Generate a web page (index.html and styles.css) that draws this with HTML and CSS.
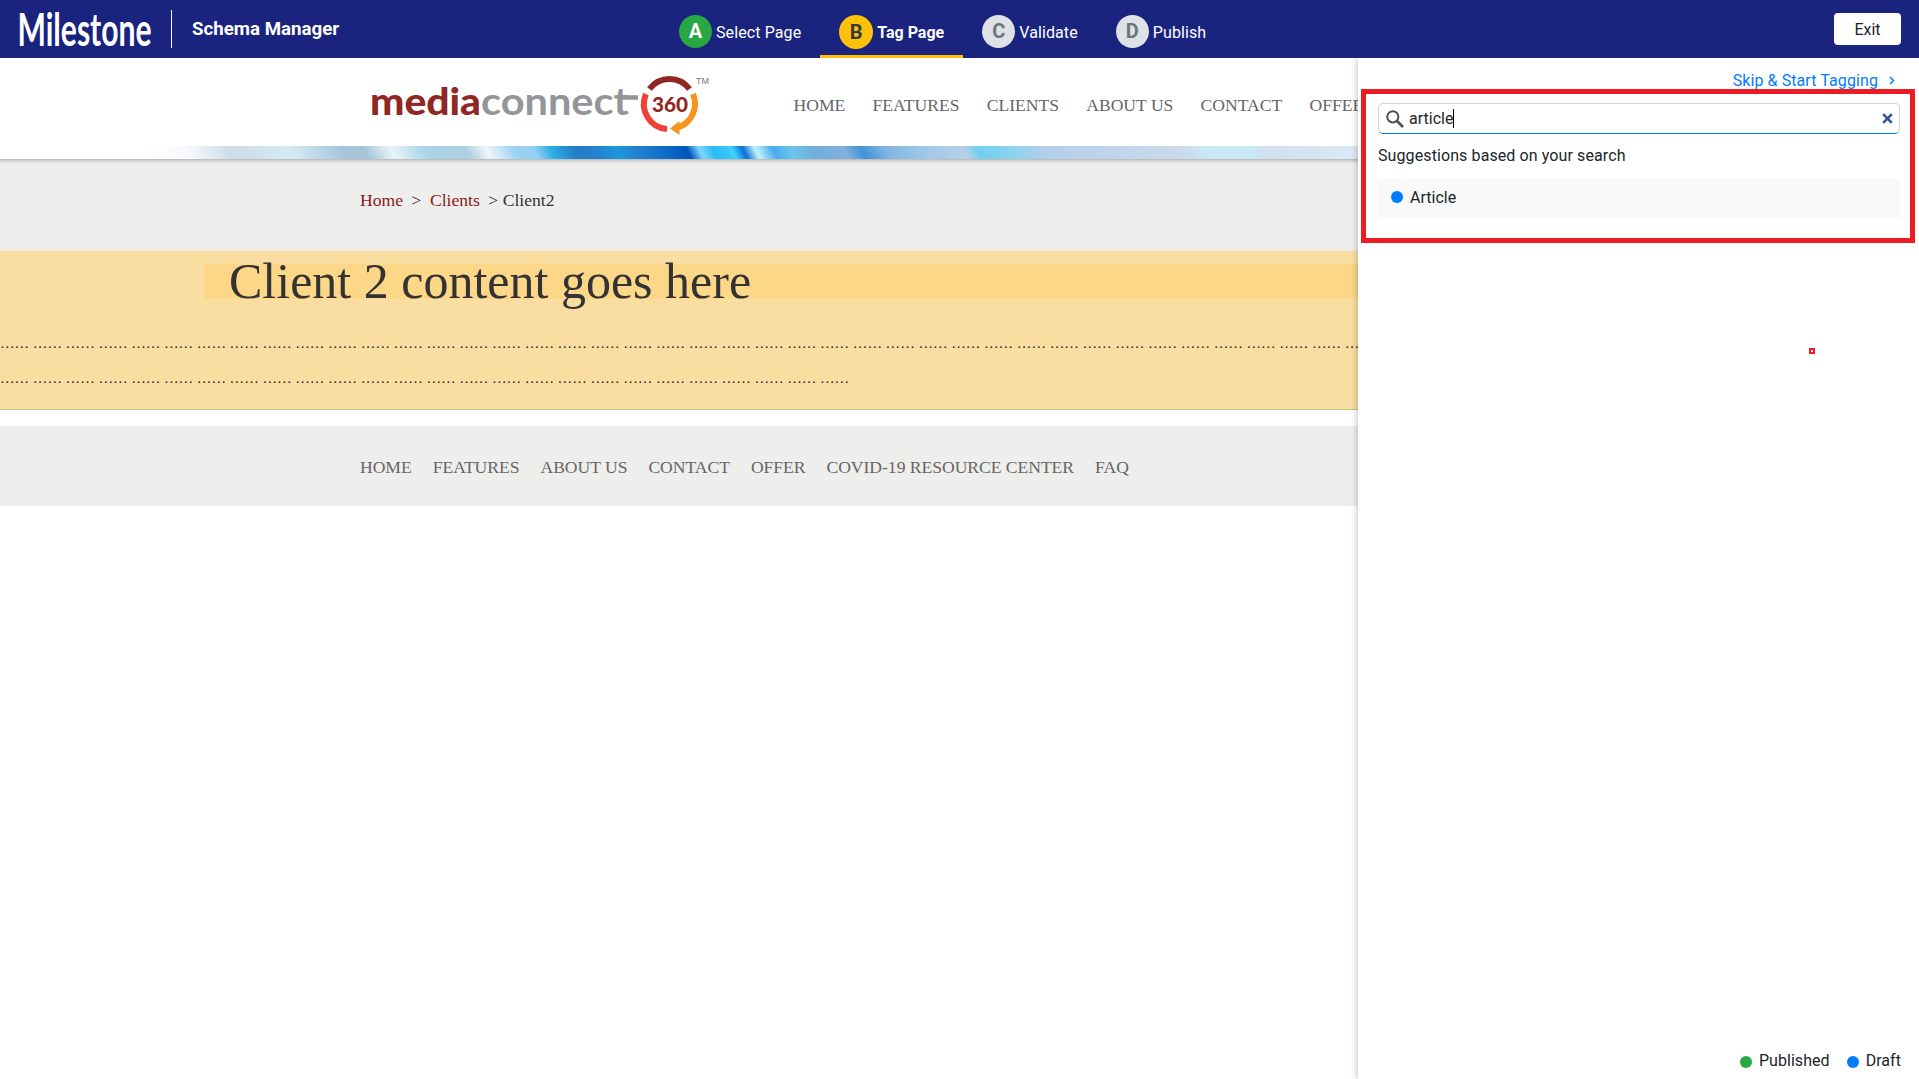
FILE: index.html
```html
<!DOCTYPE html>
<html lang="en">
<head>
<meta charset="utf-8">
<title>Schema Manager</title>
<link rel="stylesheet" href="styles.css">
</head>
<body>
<header class="topbar">
  <div class="brand">
    <svg class="milestone" width="133" height="44" viewBox="0 0 133 44">
      <text class="milestone-text" x="-1.500" y="39.500" textLength="134" lengthAdjust="spacingAndGlyphs">Milestone</text>
    </svg>
    <span class="divider"></span>
    <span class="product">Schema Manager</span>
  </div>
  <nav class="steps">
    <a class="step done"><span class="letter">A</span><span class="label">Select Page</span></a>
    <a class="step active"><span class="letter">B</span><span class="label">Tag Page</span></a>
    <a class="step"><span class="letter">C</span><span class="label">Validate</span></a>
    <a class="step"><span class="letter">D</span><span class="label">Publish</span></a>
  </nav>
  <button class="exit">Exit</button>
</header>
<div class="workspace">
  <main class="preview">
    <div class="site-head">
      <svg class="site-logo" width="340" height="62" viewBox="0 0 340 62">
        <text class="media" x="-1" y="39.500" textLength="111" lengthAdjust="spacingAndGlyphs">media</text>
        <text class="connect" x="110" y="39.500" textLength="148" lengthAdjust="spacingAndGlyphs">connect</text>
        <path d="M250 22.500H267" stroke="#939598" stroke-width="4.500"/>
        <g fill="none" stroke-width="6">
          <path d="M278.500 14A25 25 0 0 1 318.500 14" stroke="#8f2823"/>
          <path d="M275 19A25 25 0 0 0 296 54" stroke="#ef4136"/>
          <path d="M322 19A25 25 0 0 1 307 52.500" stroke="#f7941d"/>
        </g>
        <path d="M299 53.500L308.500 46L308.500 60Z" fill="#f7941d"/>
        <text class="num" x="281" y="36.500" textLength="36" lengthAdjust="spacingAndGlyphs">360</text>
        <text class="tm" x="325" y="8.500" textLength="13" lengthAdjust="spacingAndGlyphs">TM</text>
      </svg>
      <nav class="site-nav">
        <a>HOME</a><a>FEATURES</a><a>CLIENTS</a><a>ABOUT US</a><a>CONTACT</a><a>OFFER</a>
      </nav>
    </div>
    <div class="banner"></div>
    <div class="crumbs"><a>Home</a><span class="sep">&gt;</span><a>Clients</a><span class="sep last">&gt;</span><span>Client2</span></div>
    <section class="content">
      <h1>Client 2 content goes here</h1>
      <p>…… …… …… …… …… …… …… …… …… …… …… …… …… …… …… …… …… …… …… …… …… …… …… …… …… …… …… …… …… …… …… …… …… …… …… …… …… …… …… …… …… ……</p>
      <p>…… …… …… …… …… …… …… …… …… …… …… …… …… …… …… …… …… …… …… …… …… …… …… …… …… ……</p>
    </section>
    <footer class="site-foot">
      <a>HOME</a><a>FEATURES</a><a>ABOUT US</a><a>CONTACT</a><a>OFFER</a><a>COVID-19 RESOURCE CENTER</a><a>FAQ</a>
    </footer>
  </main>
  <aside class="panel">
    <a class="skip"><span>Skip &amp; Start Tagging</span><svg width="6" height="9" viewBox="0 0 6 9"><path d="M1 1L4.500 4.500L1 8" fill="none" stroke="#007bff" stroke-width="1.500"/></svg></a>
    <div class="search">
      <svg width="18" height="18" viewBox="0 0 18 18" fill="none" stroke="#495057"><circle cx="6.800" cy="6.800" r="5.600" stroke-width="2"/><path d="M11 11L17 17" stroke-width="2.600"/></svg>
      <span class="query">article</span><span class="caret"></span>
      <svg class="clear" width="11" height="11" viewBox="0 0 11 11"><path d="M1.200 1.200L9.800 9.800M9.800 1.200L1.200 9.800" stroke="#335592" stroke-width="2.600"/></svg>
    </div>
    <p class="hint">Suggestions based on your search</p>
    <div class="result"><span class="dot blue"></span><span>Article</span></div>
    <div class="legend"><span class="dot green"></span><span>Published</span><span class="dot blue"></span><span>Draft</span></div>
    <span class="callout"></span>
    <span class="marker"></span>
  </aside>
</div>
</body>
</html>
```
FILE: styles.css
```css
* { box-sizing: border-box; }
body { margin: 0; height: 1079px; overflow: hidden; display: flex; flex-direction: column; background: #fff; font-family: Roboto, "Liberation Sans", sans-serif; font-size: 16px; color: #212529; }

.topbar { height: 58px; flex: none; display: grid; grid-template-columns: 660px 1fr auto; background: #1a237e; color: #fff; padding-right: 18px; }
.brand { display: flex; align-items: flex-start; padding-left: 19px; }
.milestone { margin-top: 6px; margin-right: 19px; flex: none; overflow: visible; }
.milestone-text { fill: #fff; font-family: Lato, sans-serif; font-size: 46px; font-weight: 700; }
.divider { width: 1px; height: 38px; margin-top: 10px; background: #fff; }
.product { margin: 18px 0 0 20px; font-size: 18.700px; line-height: 22px; font-weight: 700; }

.steps { display: flex; }
.step { display: flex; align-items: center; gap: 4px; height: 58px; padding: 6px 19px 0; border-bottom: 3px solid transparent; white-space: nowrap; letter-spacing: .1px; }
.step.active { border-bottom-color: #ffc107; font-weight: 700; letter-spacing: 0; }
.letter { width: 33px; height: 33px; border-radius: 50%; background: #dee2e6; color: #6c757d; font-size: 20px; font-weight: 700; line-height: 33px; text-align: center; margin-top: 2px; }
.label { padding-top: 4px; line-height: 20px; }
.done .letter { background: #28a745; color: #fff; }
.active .letter { width: 34px; height: 34px; line-height: 34px; background: #ffc107; color: #343a40; }
.exit { width: 67px; height: 32px; margin-top: 13px; border: 0; border-radius: 4px; background: #fff; font: 16px Roboto, sans-serif; color: #212529; }

.workspace { flex: 1; display: flex; min-height: 0; }
.preview { width: 1358px; overflow: hidden; font-family: "Liberation Serif", serif; font-size: 17.600px; color: #333; }
.site-head { height: 88px; display: flex; }
.site-logo { margin: 17px 0 0 371px; flex: none; font-family: Lato, sans-serif; overflow: visible; }
.media { font-size: 38px; font-weight: 900; fill: #8f2823; }
.connect { font-size: 38px; font-weight: 700; fill: #939598; }
.num { font-size: 21px; font-weight: 900; fill: #8f2823; }
.tm { font: 9px "Liberation Sans", sans-serif; fill: #777; }
.site-nav { display: flex; gap: 27.200px; margin: 37px 0 0 82.500px; line-height: 20px; color: #666; white-space: nowrap; }
.banner { height: 13px; background: linear-gradient(65deg, transparent 10%, #f7fafc 14%, #cddeeb 17%, #cfe0ec 18.500%, #d5ebf4 21.500%, #a5c4da 25.500%, #a5c4da 27%, #e8f5fa 29%, #a9d4e8 31.500%, #add0e2 34.500%, #eff5f7 36%, #9dd2f3 38%, #92cff3 39.500%, #2bade5 40.700%, #267bc6 42.500%, #2381cd 44%, #1a98dc 45.500%, #2381cd 47%, #0b6cc8 49%, #0055bd 50.700%, #80d8fa 51.600%, #29b9f5 52.600%, #40d0ff 54%, #0870d4 54.800%, #c0f4ff 55.700%, #4baaf0 57%, #6ac5ea 58.200%, #70aedd 60%, #85b1dc 62.200%, #4293d6 63.500%, #7fb5e0 65.200%, #a0c8e8 68%, #b6d0e8 71%, #72cff0 72%, #8cd4f0 74.500%, #b4cfeb 77%, #ccdaeb 87%, #c9e9f6 89%, #c9e9f6 92%, #d1dff0 93%, #dce9f5); }
.crumbs { height: 92px; display: flex; align-items: flex-start; padding: 31px 0 0 360px; background: linear-gradient(#b7b7b7 0, #d6d6d5 2px, #eeeeec 5px); line-height: 20px; }
.crumbs a { color: #8b1a1a; }
.sep { margin: 0 8.500px; }
.sep.last { margin-right: 4.500px; }
.content { height: 159px; padding-top: 13px; background: #fadda1; border-bottom: 1px solid #cbc47a; }
.content h1 { margin: 0 0 0 204px; padding-left: 25px; height: 35px; font-size: 50px; line-height: 35px; font-weight: 400; background: #fcd788; white-space: nowrap; }
.content p { margin: 0; height: 35px; line-height: 35px; font-size: 14.590px; white-space: nowrap; color: #222; }
.content h1 + p { margin-top: 27px; }
.site-foot { height: 80px; margin-top: 16px; padding: 31px 0 0 360px; display: flex; gap: 21px; background: #eeeeec; color: #666; line-height: 20px; letter-spacing: -.03px; white-space: nowrap; }

.panel { position: relative; width: 561px; padding: 13px 19px 0 20px; display: flex; flex-direction: column; background: #fff; box-shadow: 0 0 7px rgba(0,0,0,.3); clip-path: inset(0 0 0 -10px); }
.skip { display: flex; align-items: center; justify-content: flex-end; gap: 11px; height: 19px; padding-right: 5px; color: #007bff; letter-spacing: .09px; }
.search { height: 31px; margin-top: 13px; display: flex; align-items: center; padding: 0 6px 0 7px; border: 1px solid #ced4da; border-bottom-color: #007bff; border-radius: 5px; }
.query { margin-left: 5px; }
.caret { width: 1px; height: 19px; background: #000; }
.clear { margin-left: auto; }
.hint { margin: 12px 0 0; line-height: 20px; letter-spacing: .1px; }
.result { height: 39px; margin-top: 13px; padding: 0 0 3px 12.500px; display: flex; align-items: center; gap: 7.500px; background: #f9f9f9; }
.dot { width: 12px; height: 12px; border-radius: 50%; }
.blue { background: #007bff; }
.green { background: #28a745; }
.legend { height: 34px; display: flex; align-items: flex-start; justify-content: flex-end; gap: 7px; line-height: 20px; margin: auto -1px -6px 0; letter-spacing: .05px; }
.legend .dot { margin-top: 5px; }
.legend .blue { margin-left: 10px; }
.callout { position: absolute; left: 3px; top: 31px; width: 554px; height: 154px; border: 5px solid #ed1c24; }
.marker { position: absolute; left: 451px; top: 290px; width: 6px; height: 6px; border: 2px solid #ed1c24; }
```
